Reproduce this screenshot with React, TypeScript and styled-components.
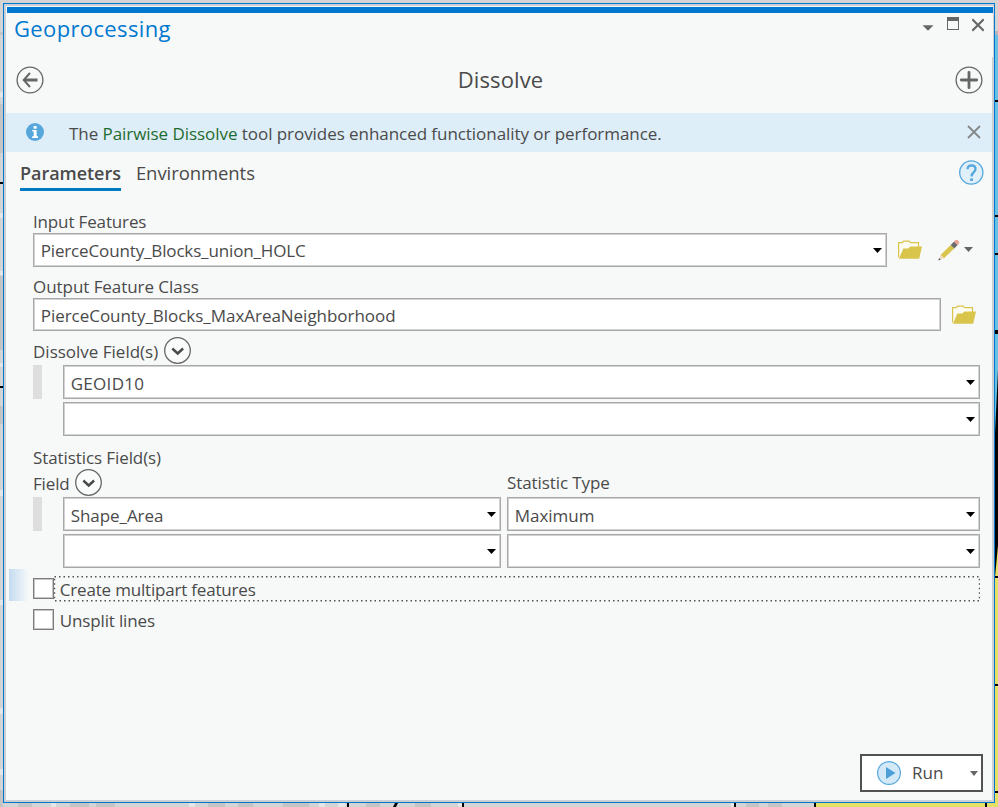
import React from "react";
import styled, { createGlobalStyle } from "styled-components";

const GlobalStyle = createGlobalStyle`
  * { box-sizing: border-box; }
  body { margin: 0; overflow: hidden; }
  button { font: inherit; color: inherit; letter-spacing: inherit; }
`;

const Desktop = styled.div`
  position: relative;
  width: 998px;
  height: 807px;
  padding: 3px;
  overflow: hidden;
  background: #d4d4d4;
  color: #4a4a4a;
  font: 17px "Open Sans", "Noto Sans", sans-serif;
  white-space: nowrap;
`;

const MapLayer = styled.svg`
  position: absolute;
  inset: 0;
`;

const Pane = styled.main`
  position: relative;
  display: flex;
  flex-direction: column;
  width: 992px;
  height: 800px;
  border: 1px solid #0078d0;
  background: #f7f9f9;
  background-clip: padding-box;
  box-shadow: inset 0 0 0 2px #ccd0d4;
  padding: 2px;
`;

const AccentBar = styled.div`
  flex: none;
  height: 7px;
  margin-right: -1px;
  border: solid #f7f9f9;
  border-width: 1px 0 0 1px;
  background: #0078d0;
`;

const TitleBar = styled.header`
  display: flex;
  justify-content: space-between;
  height: 44px;
  margin-right: -1px;
  padding: 0 9px 0 8px;
  background: #f7f9f9;
`;

const Title = styled.h1`
  margin: 0;
  color: #0078d0;
  font-size: 22px;
  font-weight: 400;
  line-height: 30px;
  letter-spacing: 0.36px;
`;

const WindowButtons = styled.div`
  display: flex;
  gap: 13px;
  padding-top: 3px;
`;

const IconButton = styled.button`
  display: flex;
  flex: none;
  padding: 0;
  border: 0;
  background: none;
`;

const ToolHeader = styled.div`
  display: flex;
  align-items: center;
  justify-content: space-between;
  height: 56px;
  padding: 0 9px 11px 10px;
`;

const ToolName = styled.h2`
  margin: -2px 0 0 2px;
  font-size: 22px;
  font-weight: 400;
  letter-spacing: 0.1px;
`;

const Notice = styled.div`
  display: flex;
  align-items: center;
  height: 39px;
  padding: 0 11px 1px 20px;
  background: #deeef9;
`;

const NoticeText = styled.p`
  flex: 1;
  margin: 2px 0 0 25px;
  letter-spacing: -0.055px;
`;

const NoticeLink = styled.a`
  color: #1e6b2e;
`;

const TabBar = styled.nav`
  display: flex;
  align-items: flex-start;
  gap: 15px;
  height: 58px;
  padding: 0 8px 0 14px;
`;

const Tab = styled.a<{ $active?: boolean }>`
  height: 39px;
  padding-top: 1px;
  border-bottom: 3px solid ${(p) => (p.$active ? "#007ac2" : "transparent")};
  font-size: ${(p) => (p.$active ? 18 : 18.5)}px;
  font-weight: ${(p) => (p.$active ? 600 : 400)};
  line-height: 40px;
  letter-spacing: ${(p) => (p.$active ? -0.04 : -0.07)}px;
`;

const HelpSlot = styled.div`
  margin-left: auto;
  padding-top: 8px;
`;

const Form = styled.form`
  display: flex;
  flex-direction: column;
  flex: 1;
  padding: 0 12px 0 27px;
`;

const Label = styled.label<{ $ls?: number; $gap?: number }>`
  flex: none;
  height: 23px;
  margin-top: ${(p) => p.$gap ?? 0}px;
  line-height: 23px;
  letter-spacing: ${(p) => p.$ls ?? 0}px;
`;

const LabelRow = styled.div<{ $height: number }>`
  display: flex;
  height: ${(p) => p.$height}px;
  padding-top: ${(p) => p.$height - 28}px;
`;

const ExpandButton = styled(IconButton)`
  height: 27px;
  margin: -0.5px 0 0 5.5px;
`;

const FieldLine = styled.div`
  display: flex;
  align-items: center;
`;

const ValueRow = styled.div`
  display: flex;
  height: 34px;
  margin-bottom: 3px;
`;

const DragHandle = styled.span<{ $visible?: boolean }>`
  width: 9px;
  margin-right: 21px;
  background: ${(p) => (p.$visible ? "#dedede" : "transparent")};
`;

const Box = styled.div<{ $width: number; $height?: number; $ls?: number }>`
  display: flex;
  flex: none;
  align-items: center;
  justify-content: space-between;
  width: ${(p) => p.$width}px;
  height: ${(p) => p.$height ?? 34}px;
  padding: 0 4px 0 6.7px;
  border: 1px solid #a8a8a8;
  background: #fff;
  box-shadow: inset 0 0 0 1px #d2d2d2;
  letter-spacing: ${(p) => p.$ls ?? 0}px;
`;

const BoxText = styled.span<{ $raised?: boolean }>`
  padding-top: ${(p) => (p.$raised ? 0 : 2)}px;
`;

const ColumnGap = styled.span`
  width: 6px;
`;

const TypeLabel = styled(Label)`
  margin-left: auto;
  width: 473px;
`;

const Options = styled.div`
  margin-top: -2px;
`;

const CheckRow = styled.div<{ $focused?: boolean }>`
  display: flex;
  align-items: center;
  height: ${(p) => (p.$focused ? 32 : 31)}px;
  margin-left: -24px;
  padding: ${(p) => (p.$focused ? 7 : 6)}px 0 0 24px;
  background: ${(p) =>
    p.$focused ? "linear-gradient(90deg, #c4dbef, #f7f9f9 20px)" : "none"};
`;

const CheckBox = styled.span`
  width: 21px;
  height: 21px;
  border: 1px solid #7c7c7c;
  background: #fff;
  box-shadow: inset 0 0 0 1px #c6c6c6;
`;

const CheckLabel = styled.span<{ $ls: number }>`
  position: relative;
  flex: 1;
  height: 25px;
  padding-left: 5.8px;
  line-height: 27px;
  letter-spacing: ${(p) => p.$ls}px;
`;

const FocusRing = styled.svg`
  position: absolute;
  left: 0;
  top: 0;
`;

const Footer = styled.footer`
  display: flex;
  justify-content: flex-end;
  padding: 0 9px 8px 0;
`;

const RunButton = styled.button`
  display: flex;
  align-items: center;
  width: 123px;
  height: 38px;
  padding: 0 3px 0 15px;
  border: 2px solid #505254;
  background: #fff;
`;

const RunText = styled.span`
  flex: 1;
  padding: 0 0 1px 11px;
  text-align: left;
  letter-spacing: 0.1px;
`;

const Caret = ({ w = 9, h = 5, color = "#000" }) => (
  <svg width={w} height={h} viewBox="0 0 10 5" preserveAspectRatio="none">
    <path d="M0 0h10L5 5z" fill={color} />
  </svg>
);

const Cross = ({ color, sw = 2 }: { color: string; sw?: number }) => (
  <svg width="14" height="14" viewBox="0 0 14 14">
    <path d="M1 1l12 12M13 1L1 13" stroke={color} strokeWidth={sw} />
  </svg>
);

const Chevron = () => (
  <svg width="27" height="27" viewBox="0 0 27 27" fill="none" stroke="#4a4a4a">
    <circle cx="13.5" cy="13.5" r="12.8" fill="#fafbfb" stroke="#666" strokeWidth="1.3" />
    <path d="M8.3 11.5l5.4 5 5.4-5" strokeWidth="2.4" />
  </svg>
);

const Folder = () => (
  <svg width="24" height="19" viewBox="0 0 24 19">
    <path d="M.6 17.5V2.6h3.7l1.3-1.5h5.6l1.3 1.5h8V7" fill="#fcfcf3" stroke="#d9c44c" strokeWidth="1.2" />
    <path d="M1 18.7L5.3 8.4h5L12.4 6.6H24L21.2 18.7z" fill="#d9c44c" />
  </svg>
);

const Pencil = () => (
  <svg width="22" height="22" viewBox="0 0 22 22">
    <path d="M2.5 16L12.7 5.9l3.5 3.5L6 19.3z" fill="#d9c44c" />
    <path d="M2.5 16l3.5 3.3L.5 21.3z" fill="#f6d9c8" />
    <path d="M1.2 18.9l1.5 1.5L.3 21.5z" fill="#555" />
    <path d="M12.7 5.9l3.4-3.5 3.6 3.5-3.5 3.5z" fill="#6b6b6b" />
    <path d="M16.1 2.4l1-1.2q1.2-1 2.5 0l1.2 1.1q1 1.2 0 2.4l-1.100 1.200z" fill="#eba193" />
  </svg>
);

const MapBackdrop = () => (
  <MapLayer width="998" height="807" viewBox="0 0 998 807">
    <g fill="#e6e6e6">
      <path d="M0 92h3v5H0zM0 213h3v5H0zM0 271h3v4H0zM0 363h3v4H0zM0 490h3v6H0zM0 600h3v5H0zM0 708h3v6H0zM0 769h3v6H0z" />
      <path d="M51 803h5v4h-5zM189 803h6v4h-6zM319 803h6v4h-6zM338 803h7v4h-7zM458 803h6v4h-6zM731 803h4v4h-4z" />
    </g>
    <g fill="#c4c4c4">
      <path d="M0 32h3v3H0zM0 104h3v49H0zM0 276h3v74H0zM0 406h3v18H0zM0 790h3v17H0z" />
      <path d="M18 803h14v4H18zM70 803h19v4H70zM96 803h19v4H96zM208 803h17v4h-17zM238 803h15v4h-15zM283 803h26v4h-26zM366 803h14v4h-14zM415 803h16v4h-16zM746 803h13v4h-13zM768 803h14v4h-14z" />
    </g>
    <path d="M995 31h3v4h-3z" fill="#b9b6bb" />
    <path d="M995 35h3v400h-3z" fill="#66c1e2" />
    <path d="M995 435h3v372h-3zM816 803h182v4H816z" fill="#e3e065" />
    <path d="M998 370v175l-3 32V433z" />
    <path d="M0 182h3v2H0zM0 386h3v2H0zM995 100h3v2h-3zM995 215h3v2h-3zM995 253h3v2h-3zM995 330h3v4h-3zM995 433h3v2h-3zM995 576h3v2h-3zM995 684h3v2h-3zM995 791h3v2h-3z" />
    <path d="M347 803h2v4h-2zM462 803h2v4h-2zM734 803h2v4h-2zM814 803h2v4h-2zM985 803h2v4h-2zM395 803h3l-2 4h-3z" />
  </MapLayer>
);

interface ComboProps {
  width: number;
  value?: string;
  ls?: number;
  raised?: boolean;
}

const Combo = ({ width, value, ls, raised }: ComboProps) => (
  <Box $width={width} $ls={ls}>
    <BoxText $raised={raised}>{value}</BoxText>
    <Caret />
  </Box>
);

const BrowseButton = styled(IconButton)`
  margin: -1px 0 0 11px;
`;

const EditButton = styled(IconButton)`
  align-items: center;
  gap: 4px;
  margin: -1px 0 0 16px;
`;

export default function App() {
  return (
    <Desktop>
      <GlobalStyle />
      <MapBackdrop />
      <Pane>
        <AccentBar />
        <TitleBar>
          <Title>Geoprocessing</Title>
          <WindowButtons>
            <IconButton aria-label="Options">
              <svg width="12" height="18" viewBox="0 0 12 18">
                <path d="M.5 9.200h11L6 14.800z" fill="#666" />
              </svg>
            </IconButton>
            <IconButton aria-label="Maximize">
              <svg width="12" height="18" viewBox="0 0 12 18">
                <path d="M0 1h12v13H0zM1 5v8h10V5z" fill="#666" fillRule="evenodd" />
              </svg>
            </IconButton>
            <IconButton aria-label="Close">
              <svg width="12" height="18" viewBox="0 0 12 18">
                <path d="M.3 3.300l11.400 11.400M11.700 3.300L.3 14.700" stroke="#666" strokeWidth="2" />
              </svg>
            </IconButton>
          </WindowButtons>
        </TitleBar>
        <ToolHeader>
          <IconButton aria-label="Back">
            <svg width="28" height="28" viewBox="0 0 28 28" fill="none" stroke="#666">
              <circle cx="14" cy="14" r="12.900" strokeWidth="1.300" />
              <path d="M21.500 14H8.500" strokeWidth="3" />
              <path d="M14 7l-6.300 7 6.300 7" strokeWidth="2" />
            </svg>
          </IconButton>
          <ToolName>Dissolve</ToolName>
          <IconButton aria-label="Add">
            <svg width="28" height="28" viewBox="0 0 28 28" fill="none" stroke="#666">
              <circle cx="14" cy="14" r="12.900" strokeWidth="1.300" />
              <path d="M14 6.300v15.400M6.300 14h15.400" strokeWidth="2.800" strokeLinecap="round" />
            </svg>
          </IconButton>
        </ToolHeader>
        <Notice>
          <svg width="18" height="18" viewBox="0 0 18 18">
            <circle cx="9" cy="9" r="9" fill="#56a7dc" />
            <path d="M7.600 2.900h3v2.800h-3zM6.300 7h4.300v6.300H12V15H6.200v-1.700h1.500V8.600H6.300z" fill="#fff" />
          </svg>
          <NoticeText>
            The <NoticeLink>Pairwise Dissolve</NoticeLink> tool provides enhanced functionality or performance.
          </NoticeText>
          <IconButton aria-label="Dismiss">
            <Cross color="#85898c" sw={1.9} />
          </IconButton>
        </Notice>
        <TabBar>
          <Tab $active>Parameters</Tab>
          <Tab>Environments</Tab>
          <HelpSlot>
            <IconButton aria-label="Help">
              <svg width="25" height="25" viewBox="0 0 25 25" fill="none" stroke="#56a7dc">
                <circle cx="12.300" cy="12.500" r="11.600" fill="#e0f0fa" strokeWidth="1.300" />
                <path d="M8.600 9.200q.1-3.900 4-3.900 3.900.1 3.900 3.600 0 1.900-2 3.600-1.900 1.500-1.900 4.100" strokeWidth="2.300" />
                <path d="M11.200 18.400h2.800v2.600h-2.800z" fill="#56a7dc" stroke="none" />
              </svg>
            </IconButton>
          </HelpSlot>
        </TabBar>
        <Form>
          <Label $ls={-0.15}>Input Features</Label>
          <FieldLine>
            <Combo width={854} value="PierceCounty_Blocks_union_HOLC" ls={-0.145} raised />
            <BrowseButton type="button" aria-label="Browse">
              <Folder />
            </BrowseButton>
            <EditButton type="button" aria-label="Edit">
              <Pencil />
              <Caret w={9} h={5} color="#666" />
            </EditButton>
          </FieldLine>
          <Label $gap={8} $ls={-0.055}>Output Feature Class</Label>
          <FieldLine>
            <Box $width={908} $height={33} $ls={-0.03}>
              <BoxText>PierceCounty_Blocks_MaxAreaNeighborhood</BoxText>
            </Box>
            <BrowseButton type="button" aria-label="Browse">
              <Folder />
            </BrowseButton>
          </FieldLine>
          <LabelRow $height={34}>
            <Label $gap={3}>Dissolve Field(s)</Label>
            <ExpandButton type="button" aria-label="Add many">
              <Chevron />
            </ExpandButton>
          </LabelRow>
          <ValueRow>
            <DragHandle $visible />
            <Combo width={917} value="GEOID10" ls={0.3} />
          </ValueRow>
          <ValueRow>
            <DragHandle />
            <Combo width={917} />
          </ValueRow>
          <Label $gap={7} $ls={-0.09}>Statistics Field(s)</Label>
          <LabelRow $height={28}>
            <Label $gap={3} $ls={-0.15}>Field</Label>
            <ExpandButton type="button" aria-label="Add many">
              <Chevron />
            </ExpandButton>
            <TypeLabel $gap={2} $ls={-0.09}>Statistic Type</TypeLabel>
          </LabelRow>
          <ValueRow>
            <DragHandle $visible />
            <Combo width={438} value="Shape_Area" ls={-0.06} />
            <ColumnGap />
            <Combo width={473} value="Maximum" />
          </ValueRow>
          <ValueRow>
            <DragHandle />
            <Combo width={438} />
            <ColumnGap />
            <Combo width={473} />
          </ValueRow>
          <Options>
            <CheckRow $focused>
              <CheckBox />
              <CheckLabel $ls={-0.19}>
                Create multipart features
                <FocusRing width="926" height="26" viewBox="0 0 926 26">
                  <rect x="0.500" y="0.700" width="925" height="24" fill="none" stroke="#505050" strokeWidth="1.400" strokeDasharray="1.500 3" />
                </FocusRing>
              </CheckLabel>
            </CheckRow>
            <CheckRow>
              <CheckBox />
              <CheckLabel $ls={-0.15}>Unsplit lines</CheckLabel>
            </CheckRow>
          </Options>
        </Form>
        <Footer>
          <RunButton>
            <svg width="24" height="24" viewBox="0 0 24 24">
              <circle cx="12" cy="12" r="11.400" fill="#d3e9f7" stroke="#56a7dc" strokeWidth="1.200" />
              <path d="M9 6l9.500 6L9 18z" fill="#4d9fd8" />
            </svg>
            <RunText>Run</RunText>
            <Caret w={8} h={5} color="#666" />
          </RunButton>
        </Footer>
      </Pane>
    </Desktop>
  );
}
